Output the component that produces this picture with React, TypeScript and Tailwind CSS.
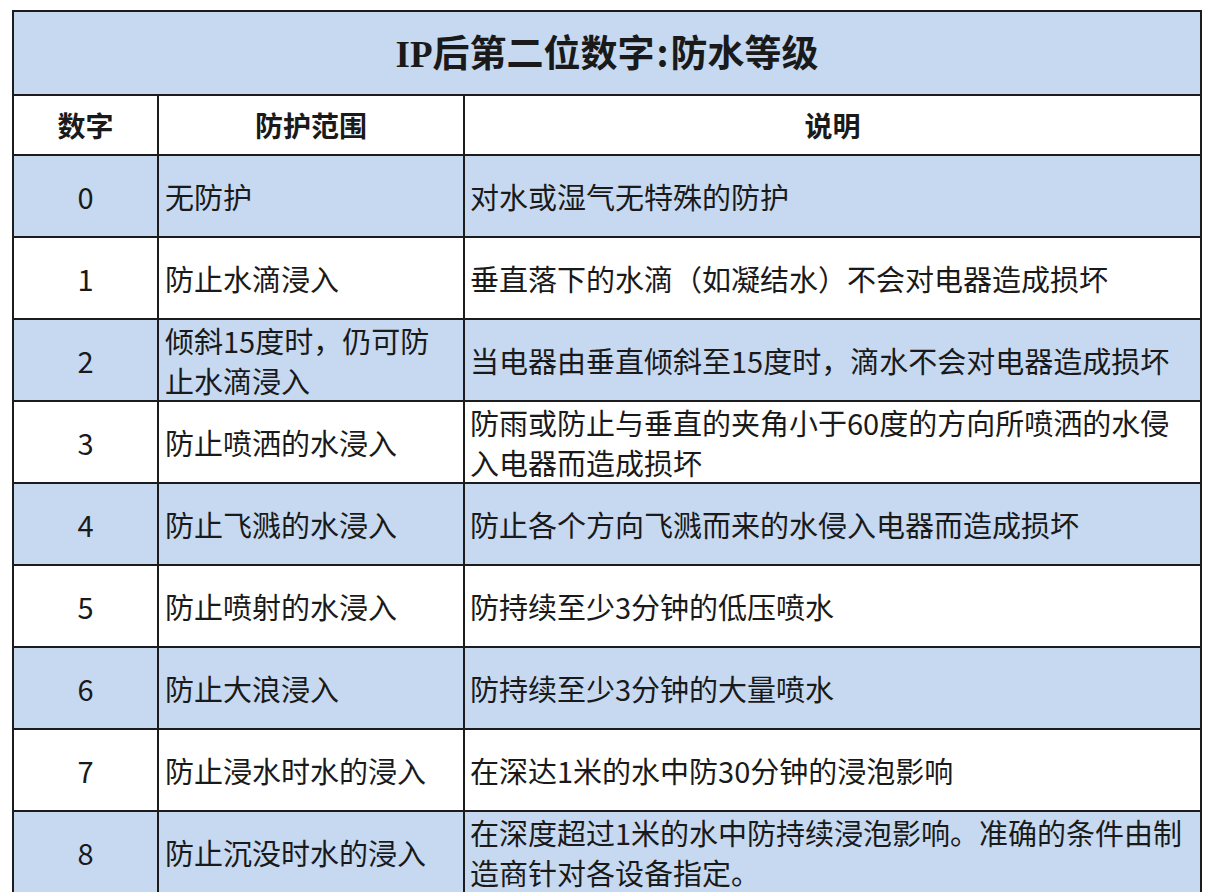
import React from "react";

type Row = { n: string; scope: React.ReactNode; desc: React.ReactNode; blue: boolean };

const rows: Row[] = [
  { n: "0", scope: "无防护", desc: "对水或湿气无特殊的防护", blue: true },
  { n: "1", scope: "防止水滴浸入", desc: "垂直落下的水滴（如凝结水）不会对电器造成损坏", blue: false },
  {
    n: "2",
    scope: (
      <>
        倾斜15度时，仍可防
        <br />
        止水滴浸入
      </>
    ),
    desc: "当电器由垂直倾斜至15度时，滴水不会对电器造成损坏",
    blue: true,
  },
  {
    n: "3",
    scope: "防止喷洒的水浸入",
    desc: (
      <>
        防雨或防止与垂直的夹角小于60度的方向所喷洒的水侵
        <br />
        入电器而造成损坏
      </>
    ),
    blue: false,
  },
  { n: "4", scope: "防止飞溅的水浸入", desc: "防止各个方向飞溅而来的水侵入电器而造成损坏", blue: true },
  { n: "5", scope: "防止喷射的水浸入", desc: "防持续至少3分钟的低压喷水", blue: false },
  { n: "6", scope: "防止大浪浸入", desc: "防持续至少3分钟的大量喷水", blue: true },
  { n: "7", scope: "防止浸水时水的浸入", desc: "在深达1米的水中防30分钟的浸泡影响", blue: false },
  {
    n: "8",
    scope: "防止沉没时水的浸入",
    desc: (
      <>
        在深度超过1米的水中防持续浸泡影响。准确的条件由制
        <br />
        造商针对各设备指定。
      </>
    ),
    blue: true,
  },
];

export default function App() {
  return (
    <div className="w-[1216px] h-[892px] overflow-hidden bg-white pl-[12px] pt-[10px] font-['Noto_Sans_CJK_SC','Noto_Sans',sans-serif] text-[#1a1a1a]">
      <table className="table-fixed border-collapse w-[1188px] border-2 border-[#1c1c1c]">
        <colgroup>
          <col className="w-[145px]" />
          <col className="w-[306px]" />
          <col className="w-[737px]" />
        </colgroup>
        <thead>
          <tr className="h-[84px] bg-[#c6d9f1]">
            <th colSpan={3} className="border-2 border-[#1c1c1c] text-center text-[37px] font-bold leading-[40px]">
              <span className="font-['Liberation_Serif',serif]">IP</span>后第二位数字<span className="px-[2px]">:</span>防水等级
            </th>
          </tr>
          <tr className="h-[60px] bg-white">
            <th className="border-2 border-[#1c1c1c] text-center text-[28px] font-bold leading-[36px]">数字</th>
            <th className="border-2 border-[#1c1c1c] text-center text-[28px] font-bold leading-[36px]">防护范围</th>
            <th className="border-2 border-[#1c1c1c] text-center text-[28px] font-bold leading-[36px]">说明</th>
          </tr>
        </thead>
        <tbody>
          {rows.map((r) => (
            <tr key={r.n} className={`h-[82px] ${r.blue ? "bg-[#c6d9f1]" : "bg-white"}`}>
              <td className="border-2 border-[#1c1c1c] text-center text-[29px] leading-[40px] align-middle">{r.n}</td>
              <td className="border-2 border-[#1c1c1c] pl-[6px] pr-[4px] text-[29px] leading-[40px] align-middle whitespace-nowrap">
                {r.scope}
              </td>
              <td className="border-2 border-[#1c1c1c] pl-[5px] pr-[4px] text-[29px] leading-[40px] align-middle whitespace-nowrap">
                {r.desc}
              </td>
            </tr>
          ))}
        </tbody>
      </table>
    </div>
  );
}
